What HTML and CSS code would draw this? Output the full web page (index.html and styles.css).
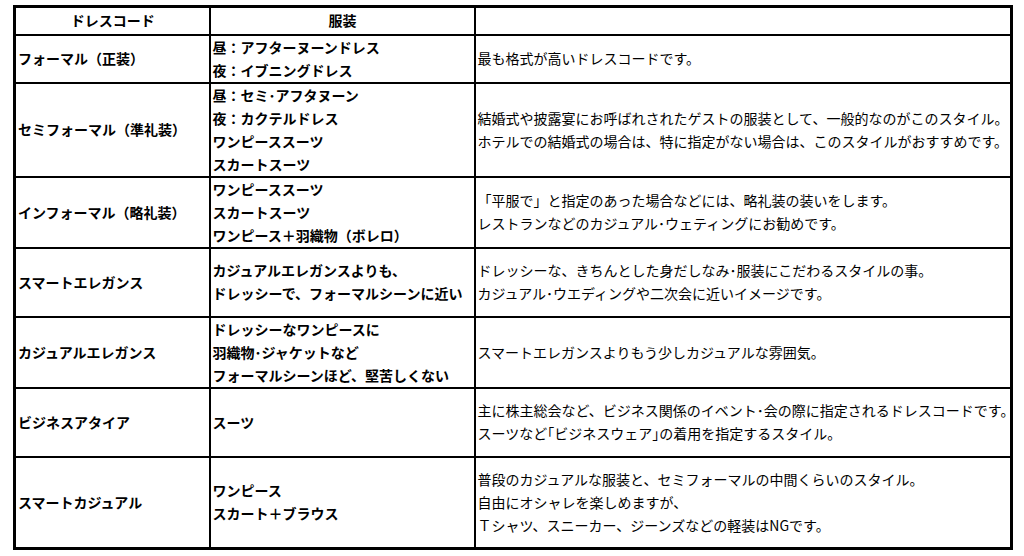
FILE: index.html
```html
<!DOCTYPE html>
<html lang="ja">
<head>
<meta charset="utf-8">
<link rel="stylesheet" href="styles.css">
</head>
<body>
<div class="sheet">
<table class="dress">
<colgroup><col class="c1"><col class="c2"><col class="c3"></colgroup>
<tr class="r0"><th>ドレスコード</th><th>服装</th><th></th></tr>
<tr class="r1"><td class="name">フォーマル（正装）</td><td class="wear">昼：アフターヌーンドレス<br>夜：イブニングドレス</td><td class="desc">最も格式が高いドレスコードです。</td></tr>
<tr class="r2"><td class="name">セミフォーマル（準礼装）</td><td class="wear">昼：セミ･アフタヌーン<br>夜：カクテルドレス<br>ワンピーススーツ<br>スカートスーツ</td><td class="desc">結婚式や披露宴にお呼ばれされたゲストの服装として、一般的なのがこのスタイル。<br>ホテルでの結婚式の場合は、特に指定がない場合は、このスタイルがおすすめです。</td></tr>
<tr class="r3"><td class="name">インフォーマル（略礼装）</td><td class="wear">ワンピーススーツ<br>スカートスーツ<br>ワンピース＋羽織物（ボレロ）</td><td class="desc">「平服で」と指定のあった場合などには、略礼装の装いをします。<br>レストランなどのカジュアル･ウェティングにお勧めです。</td></tr>
<tr class="r4"><td class="name">スマートエレガンス</td><td class="wear">カジュアルエレガンスよりも、<br>ドレッシーで、フォーマルシーンに近い</td><td class="desc">ドレッシーな、きちんとした身だしなみ･服装にこだわるスタイルの事。<br>カジュアル･ウエディングや二次会に近いイメージです。</td></tr>
<tr class="r5"><td class="name">カジュアルエレガンス</td><td class="wear">ドレッシーなワンピースに<br>羽織物･ジャケットなど<br>フォーマルシーンほど、堅苦しくない</td><td class="desc">スマートエレガンスよりもう少しカジュアルな雰囲気。</td></tr>
<tr class="r6"><td class="name">ビジネスアタイア</td><td class="wear">スーツ</td><td class="desc">主に株主総会など、ビジネス関係のイベント･会の際に指定されるドレスコードです。<br>スーツなど｢ビジネスウェア｣の着用を指定するスタイル。</td></tr>
<tr class="r7"><td class="name">スマートカジュアル</td><td class="wear">ワンピース<br>スカート＋ブラウス</td><td class="desc">普段のカジュアルな服装と、セミフォーマルの中間くらいのスタイル。<br>自由にオシャレを楽しめますが、<br>Ｔシャツ、スニーカー、ジーンズなどの軽装はNGです。</td></tr>
</table>
</div>
</body>
</html>
```
FILE: styles.css
```css
html, body {
  margin: 0;
  padding: 0;
  background: #fff;
}
.sheet {
  padding: 5px 0 0 13px;
}
.dress {
  border-collapse: collapse;
  border: 3px solid #000;
  width: 1000px;
  table-layout: fixed;
  font-family: "Meiryo UI", "Noto Sans CJK JP", sans-serif;
  font-size: 14px;
  line-height: 23px;
  color: #000;
}
.c1 { width: 195px; }
.c2 { width: 265px; }
.dress th, .dress td {
  border: 2px solid #000;
  padding: 0 1px 0 2px;
  vertical-align: middle;
  text-align: left;
  white-space: nowrap;
}
.dress th {
  text-align: center;
  font-weight: bold;
}
.name, .wear { font-weight: bold; }
.desc { font-weight: normal; }
.r0 { height: 28px; }
.r1 { height: 47px; }
.r2 { height: 91px; }
.r3 { height: 70px; }
.r4 { height: 69px; }
.r5 { height: 71px; }
.r6 { height: 69px; }
.r7 { height: 92px; }
```
